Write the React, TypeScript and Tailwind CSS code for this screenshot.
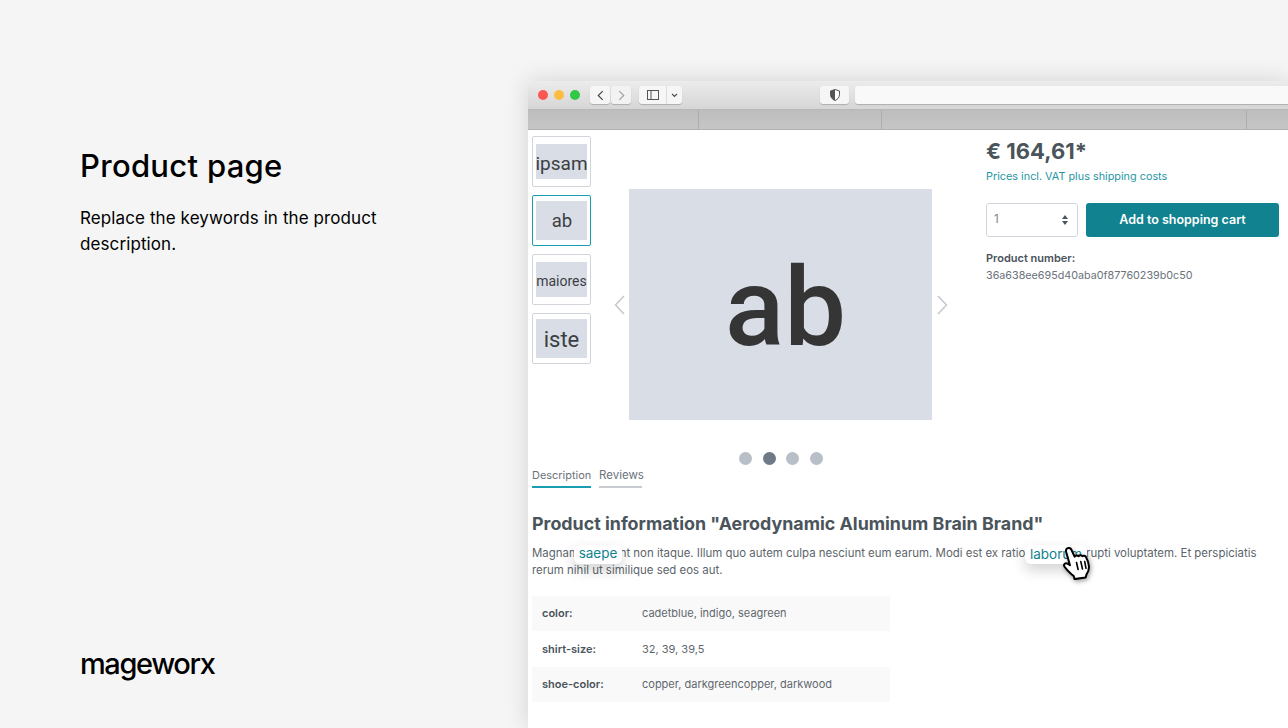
import React from 'react';

const sans = "font-['Inter',sans-serif]";

const thumbs = [
  { label: 'ipsam', box: 'h-[35px] text-[19px] pt-[6px]', active: false },
  { label: 'ab', box: 'h-[39px] text-[18.500px] pt-[3px] pl-[1px]', active: true },
  { label: 'maiores', box: 'h-[35px] text-[14px] pt-[3px]', active: false },
  { label: 'iste', box: 'h-[39px] text-[22px] pt-[2px]', active: false },
];

const specs = [
  { name: 'color:', value: 'cadetblue, indigo, seagreen', shaded: true },
  { name: 'shirt-size:', value: '32, 39, 39,5', shaded: false },
  { name: 'shoe-color:', value: 'copper, darkgreencopper, darkwood', shaded: true },
];

const Chevron: React.FC<{ flip?: boolean }> = ({ flip }) => (
  <svg viewBox="0 0 11 20" className={`w-[11px] h-[20px] shrink-0 ${flip ? 'rotate-180 ml-[1px]' : ''}`} fill="none" stroke="#c4c7cc" strokeWidth="1.5">
    <path d="M10 1 1.5 10 10 19" />
  </svg>
);

const HandCursor = () => (
  <svg viewBox="0 0 30 34" className="absolute left-[-8px] top-[9px] w-[30px] h-[34px]" style={{ filter: 'drop-shadow(1px 2px 2px rgba(0,0,0,.35))' }}>
    <path
      d="M5 2.5c1.6-1.2 3.6-.5 4.4 1.2l3.2 7c.8-1.4 2.8-1.6 4-.5.7-1.1 2.8-1.2 3.8 0 1-.8 2.8-.6 3.6.7 1.5 2.7 2.6 6.2 2.9 9.2.3 3.3-.6 5.8-2.3 8l-1 3.4-11 1.6-1-3.2c-2.300-1.500-6.400-5.800-8.600-8.500-1-1.300-1.200-2.900-.2-3.700 1.200-1 3-.4 5.200 1.500L4.300 6.500C3.800 5 4 3.300 5 2.500Z"
      fill="#fff"
      stroke="#000"
      strokeWidth="2"
      strokeLinejoin="round"
    />
    <path d="M14.500 16.500l1.600 7M18.800 15.500l1.700 7.500M22.700 15.500l1.300 6.800" stroke="#000" strokeWidth="1.600" strokeLinecap="round" fill="none" />
  </svg>
);

const BrowserBar = () => (
  <div>
    <div className="h-[29px] flex items-center pl-[10px] bg-gradient-to-b from-[#ececec] to-[#d6d6d6] border-b border-[#b8b8b8]">
      <span className="w-[10px] h-[10px] rounded-full bg-[#fc5753]" />
      <span className="w-[10px] h-[10px] rounded-full bg-[#fdbc40] ml-[6px]" />
      <span className="w-[10px] h-[10px] rounded-full bg-[#33c748] ml-[6px]" />
      <div className="ml-[10px] flex gap-px">
        <div className="w-[20px] h-[18px] bg-[#f6f6f6] rounded-[3px] shadow-[0_1px_1px_rgba(0,0,0,.2)] flex items-center justify-center">
          <svg viewBox="0 0 8 12" className="w-[7px] h-[11px]" fill="none" stroke="#4a4a4a" strokeWidth="1.4"><path d="M6.500 1 1.500 6l5 5" /></svg>
        </div>
        <div className="w-[20px] h-[18px] bg-[#f2f2f2] rounded-[3px] shadow-[0_1px_1px_rgba(0,0,0,.2)] flex items-center justify-center">
          <svg viewBox="0 0 8 12" className="w-[7px] h-[11px]" fill="none" stroke="#a0a0a0" strokeWidth="1.4"><path d="M1.500 1l5 5-5 5" /></svg>
        </div>
      </div>
      <div className="ml-[8px] w-[43px] h-[18px] bg-[#f6f6f6] rounded-[3px] shadow-[0_1px_1px_rgba(0,0,0,.2)] flex items-center">
        <div className="w-[28px] h-full border-r border-[#dcdcdc] flex items-center justify-center">
          <svg viewBox="0 0 12 10" className="w-[12px] h-[10px]" fill="none" stroke="#555" strokeWidth="1"><rect x=".5" y=".5" width="11" height="9" /><path d="M4 .5v9" /></svg>
        </div>
        <svg viewBox="0 0 8 6" className="w-[7px] h-[5px] ml-[4px]" fill="none" stroke="#444" strokeWidth="1.400"><path d="M1 1l3 3 3-3" /></svg>
      </div>
      <div className="ml-[138px] w-[29px] h-[18px] bg-[#f6f6f6] rounded-[3px] shadow-[0_1px_1px_rgba(0,0,0,.2)] flex items-center justify-center">
        <svg viewBox="0 0 10 12" className="w-[10px] h-[12px]"><path d="M5 .5 9.500 2v3.500c0 3-2 5-4.500 6-2.500-1-4.500-3-4.500-6V2Z" fill="#fff" stroke="#555" /><path d="M5 .5 .5 2v3.500c0 3 2 5 4.500 6Z" fill="#555" /></svg>
      </div>
      <div className="ml-[6px] flex-1 h-[18px] bg-[#f9f9f9] rounded-l-[3px] shadow-[0_1px_1px_rgba(0,0,0,.2)]" />
    </div>
    <div className="h-[20px] flex bg-gradient-to-b from-[#bdbdbd] to-[#c6c6c6] border-b border-[#b0b0b0]">
      <div className="w-[171px] border-r border-[#adadad]" />
      <div className="w-[183px] border-r border-[#adadad]" />
      <div className="w-[365px] border-r border-[#adadad]" />
      <div className="flex-1" />
    </div>
  </div>
);

const App: React.FC = () => {
  return (
    <div className={`w-[1288px] h-[728px] overflow-hidden flex bg-[#f5f5f5] ${sans}`}>
      <aside className="w-[528px] shrink-0 pl-[80px] pt-[147px] pb-[46px] flex flex-col text-black">
        <h1 className="text-[31px] leading-[38px] font-medium tracking-[0.3px]">Product page</h1>
        <p className="mt-[20px] w-[320px] text-[17px] leading-[26px] tracking-[0.1px]">Replace the keywords in the product description.</p>
        <div className="mt-auto text-[29px] leading-[36px] font-medium tracking-[-1.4px]">mageworx</div>
      </aside>

      <main className="flex-1 mt-[81px] bg-white shadow-[0_0_24px_rgba(0,0,0,.14)] text-[#4a545b] rounded-tl-[4px] overflow-hidden">
        <BrowserBar />

        <div className="pl-[4px]">
          <section className="flex h-[336px]">
            <div className="w-[59px] pt-[6px] flex flex-col gap-[8px] shrink-0">
              {thumbs.map((t) => (
                <div
                  key={t.label}
                  className={`h-[51px] rounded-[2px] border flex items-center justify-center ${t.active ? 'border-[#189eb0]' : 'border-[#d1d5db]'}`}
                >
                  <div className={`w-[51px] ${t.box} bg-[#d9dde6] text-[#3c3f42] font-['Roboto',sans-serif] flex items-center justify-center overflow-hidden`}>
                    {t.label}
                  </div>
                </div>
              ))}
            </div>

            <div className="ml-[23px] pt-[59px] shrink-0">
              <div className="flex items-center gap-[4px]">
                <Chevron />
                <div className="w-[303px] h-[231px] bg-[#d9dde6] flex items-center justify-center pl-[10px] pt-[6px] font-['Roboto',sans-serif] font-medium text-[110px] leading-none text-[#353535]">
                  ab
                </div>
                <Chevron flip />
              </div>
              <div className="mt-[32px] ml-[125px] flex gap-[10.500px]">
                <span className="w-[13px] h-[13px] rounded-full bg-[#b9bfc7]" />
                <span className="w-[13px] h-[13px] rounded-full bg-[#6f7a86]" />
                <span className="w-[13px] h-[13px] rounded-full bg-[#b9bfc7]" />
                <span className="w-[13px] h-[13px] rounded-full bg-[#b9bfc7]" />
              </div>
            </div>

            <div className="ml-[38px] w-[293px] shrink-0">
              <div className="mt-[7px] text-[22px] leading-[28px] font-bold">€ 164,61*</div>
              <div className="mt-[1px] text-[10.850px] leading-[20px] text-[#1f96a3]">Prices incl. VAT plus shipping costs</div>
              <div className="mt-[17px] flex gap-[8px]">
                <div className="w-[92px] h-[34px] rounded-[3px] border border-[#d1d5db] flex items-center justify-between pl-[7px] pr-[9px] text-[11.500px] text-[#7a828a]">
                  <span>1</span>
                  <svg viewBox="0 0 6 10" className="w-[6px] h-[10px]" fill="#4a545b"><path d="M3 0l3 4H0ZM3 10 0 6h6Z" /></svg>
                </div>
                <button className="w-[193px] h-[34px] rounded-[3px] bg-[#11828f] text-white text-[12.500px] font-semibold">Add to shopping cart</button>
              </div>
              <div className="mt-[13px] text-[11px] leading-[17px] font-semibold">Product number:</div>
              <div className="text-[10.750px] leading-[17px] text-[#6b737b]">36a638ee695d40aba0f87760239b0c50</div>
            </div>
          </section>

          <div className="flex gap-[8px] text-[#6b737b]">
            <div className="w-[59px] h-[22px] pt-px text-[10.950px] leading-[17px] text-center whitespace-nowrap border-b-2 border-[#189eb0]">Description</div>
            <div className="w-[43px] h-[22px] pt-px text-[11.500px] leading-[17px] text-center border-b-2 border-[#c8ccd1]">Reviews</div>
          </div>

          <h2 className="mt-[24px] text-[17.850px] leading-[24px] font-bold">Product information "Aerodynamic Aluminum Brain Brand"</h2>

          <p className="relative mt-[9px] w-[740px] text-[11.450px] leading-[17px] text-[#5c646b]">
            Magnam deserunt non itaque. Illum quo autem culpa nesciunt eum earum. Modi est ex ratione quia corrupti voluptatem. Et perspiciatis rerum nihil ut similique sed eos aut.
            <span className="absolute left-[42px] top-0 w-[48px] h-[19px] bg-white rounded-[6px] shadow-[0_6px_14px_rgba(0,0,0,.18)] text-[#11828f] text-[13.500px] leading-[17px] text-center">saepe</span>
            <span className="absolute left-[493px] top-0 w-[62px] h-[19px] bg-white rounded-[6px] shadow-[0_6px_14px_rgba(0,0,0,.18)] text-[#11828f] text-[13.500px] leading-[18px] text-center">
              laborum
              <span className="absolute left-[45px] top-[-8px] w-0 h-0"><HandCursor /></span>
            </span>
          </p>

          <div className="mt-[17px] w-[358px] text-[11px]">
            {specs.map((s) => (
              <div key={s.name} className={`h-[35.300px] flex items-center pl-[10px] ${s.shaded ? 'bg-[#f9f9f9]' : ''}`}>
                <span className="w-[100px] font-semibold">{s.name}</span>
                <span className="text-[#5f676e]">{s.value}</span>
              </div>
            ))}
          </div>
        </div>
      </main>
    </div>
  );
};

export default App;
